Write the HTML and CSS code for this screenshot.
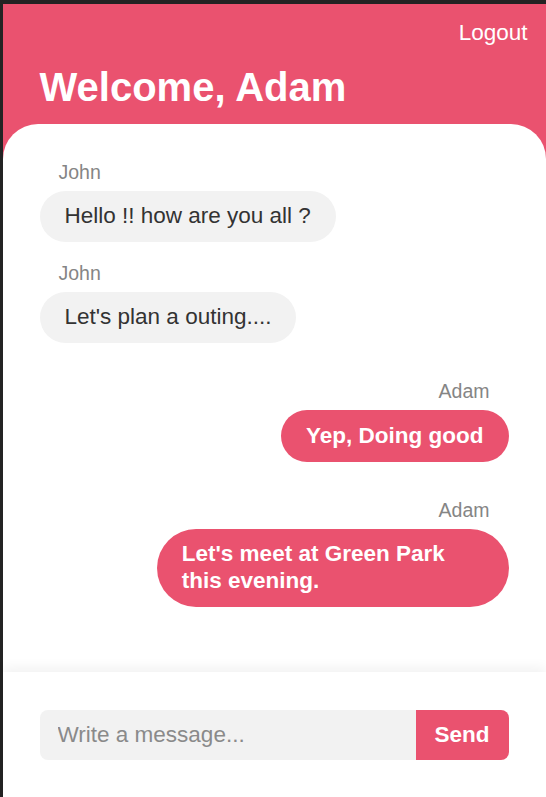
FILE: index.html
```html
<!DOCTYPE html>
<html lang="en">
<head>
<meta charset="utf-8">
<title>Chat</title>
<link rel="stylesheet" href="styles.css">
</head>
<body>
<div class="app">
  <header class="top">
    <div class="logout">Logout</div>
    <h1 class="welcome">Welcome, Adam</h1>
  </header>
  <main class="chat">
    <div class="msg received">
      <div class="name">John</div>
      <div class="bubble">Hello !! how are you all ?</div>
    </div>
    <div class="msg received">
      <div class="name">John</div>
      <div class="bubble">Let's plan a outing....</div>
    </div>
    <div class="msg sent">
      <div class="name">Adam</div>
      <div class="bubble">Yep, Doing good</div>
    </div>
    <div class="msg sent">
      <div class="name">Adam</div>
      <div class="bubble">Let's meet at Green Park this evening.</div>
    </div>
  </main>
  <footer class="composer">
    <form class="form">
      <input class="input" type="text" placeholder="Write a message..." autofocus>
      <button class="send" type="button">Send</button>
    </form>
  </footer>
</div>
</body>
</html>
```

FILE: styles.css
```css
html, body {
  margin: 0;
  padding: 0;
  height: 100%;
}
body {
  background: #232323;
  font-family: "Liberation Sans", Arial, sans-serif;
  overflow: hidden;
}
.app {
  margin: 4px 0 0 3px;
  height: calc(100vh - 4px);
  display: flex;
  flex-direction: column;
  background: #ea526f;
}
.top {
  padding: 16px 18.5px 13.5px 36.5px;
  color: #fff;
}
.logout {
  text-align: right;
  font-size: 22.5px;
}
.welcome {
  margin: 18px 0 0;
  font-size: 40px;
  font-weight: bold;
  line-height: 46px;
}
.chat {
  flex: 1;
  background: #fff;
  border-radius: 35px 35px 0 0;
  padding: 37px 37.5px 37.5px 36.5px;
  display: flex;
  flex-direction: column;
}
.msg {
  display: flex;
  flex-direction: column;
  align-items: flex-start;
  margin-bottom: 19.5px;
}
.msg.sent {
  align-items: flex-end;
  margin-top: 17.5px;
}
.name {
  font-size: 19.5px;
  color: #858585;
  padding: 0 19px;
  margin-bottom: 7px;
}
.bubble {
  max-width: 75%;
  box-sizing: border-box;
  padding: 12.5px 25px;
  border-radius: 50px;
  font-size: 22.5px;
  line-height: 26.5px;
  background: #f2f2f2;
  color: #333;
}
.sent .bubble {
  background: #ea526f;
  color: #fff;
  font-weight: bold;
}
.composer {
  background: #fff;
  padding: 37.5px 37.5px 37.5px 36.5px;
  box-shadow: 0 -4px 12px rgba(0, 0, 0, 0.06);
  position: relative;
}
.form {
  display: flex;
  height: 50px;
}
.input {
  flex: 1;
  min-width: 0;
  border: none;
  outline: none;
  background: #f2f2f2;
  border-radius: 8px 0 0 8px;
  padding: 0 18px;
  font-family: inherit;
  font-size: 22.5px;
  color: #333;
  caret-color: #222;
}
.input::placeholder {
  color: #8a8a8a;
}
.send {
  width: 93px;
  border: none;
  background: #ea526f;
  color: #fff;
  border-radius: 0 8px 8px 0;
  font-family: inherit;
  font-size: 22.5px;
  font-weight: bold;
  padding: 0;
}
```
